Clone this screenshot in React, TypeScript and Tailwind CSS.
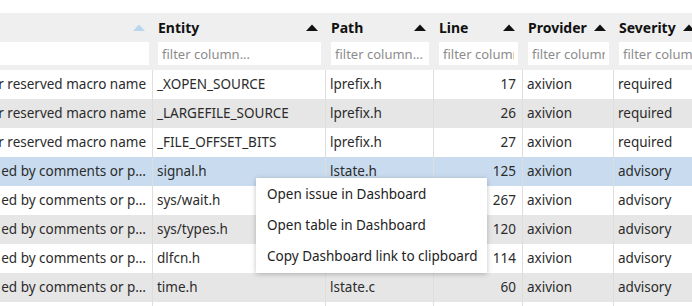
import React from "react";

const cols = [
  { key: "msg", w: "w-[153px]", title: "", first: true },
  { key: "entity", w: "w-[173px]", title: "Entity" },
  { key: "path", w: "w-[108px]", title: "Path" },
  { key: "line", w: "w-[89px]", title: "Line" },
  { key: "provider", w: "w-[91px]", title: "Provider" },
  { key: "severity", w: "w-[89px]", title: "Severity" },
];

const rows = [
  ["er reserved macro name", "_XOPEN_SOURCE", "lprefix.h", "17", "axivion", "required"],
  ["er reserved macro name", "_LARGEFILE_SOURCE", "lprefix.h", "26", "axivion", "required"],
  ["er reserved macro name", "_FILE_OFFSET_BITS", "lprefix.h", "27", "axivion", "required"],
  ["ed by comments or p…", "signal.h", "lstate.h", "125", "axivion", "advisory"],
  ["ed by comments or p…", "sys/wait.h", "", "267", "axivion", "advisory"],
  ["ed by comments or p…", "sys/types.h", "", "120", "axivion", "advisory"],
  ["ed by comments or p…", "dlfcn.h", "", "114", "axivion", "advisory"],
  ["ed by comments or p…", "time.h", "lstate.c", "60", "axivion", "advisory"],
  ["", "", "", "", "", ""],
];

function Arrow({ light }: { light?: boolean }) {
  return (
    <svg width="12" height="7" viewBox="0 0 12 7" className="shrink-0">
      <polygon points="0,7 6,0.5 12,7" fill={light ? "#b9d7ec" : "#111"} />
    </svg>
  );
}

export default function App() {
  return (
    <div
      className="relative w-[692px] h-[306px] overflow-hidden bg-white text-[13.5px] text-[#2b2b2b]"
      style={{ fontFamily: '"Noto Sans", "Open Sans", sans-serif' }}
    >
      <div className="h-[13px]" />
      {/* header */}
      <div className="flex h-[57px] bg-[#efefef]">
        {cols.map((c) => (
          <div key={c.key} className={`${c.w} shrink-0 flex flex-col`}>
            <div className="h-[29px] flex items-center justify-between pl-[5px] pr-[8px]">
              <span className="font-bold text-[#111] text-[14px]">{c.title}</span>
              <Arrow light={c.first} />
            </div>
            <div className={c.first ? "pr-[4px]" : "px-[5px]"}>
              <input
                className="w-full h-[23px] bg-white outline-none px-[4px] text-[13px] placeholder:text-[#8c8c8c]"
                placeholder={c.first ? "" : "filter column..."}
                style={{ fontFamily: '"Noto Sans", "Open Sans", sans-serif' }}
              />
            </div>
          </div>
        ))}
      </div>
      {/* rows */}
      {rows.map((r, i) => {
        const bg = i === 3 ? "bg-[#c9dcef]" : i % 2 === 1 ? "bg-[#e6e6e6]" : "bg-white";
        return (
          <div key={i} className={`flex h-[29px] ${bg}`}>
            {cols.map((c, j) => (
              <div
                key={c.key}
                className={`${c.w} shrink-0 flex items-center overflow-hidden whitespace-nowrap border-r border-[#dedede] ${
                  j === 0 ? "justify-end pr-[6px]" : j === 3 ? "justify-end pr-[6px]" : "pl-[4px]"
                }`}
              >
                {r[j]}
              </div>
            ))}
          </div>
        );
      })}
      {/* context menu */}
      <div className="absolute left-[256px] top-[178px] w-[231px] bg-white shadow-[0_1px_5px_rgba(0,0,0,0.25)] py-[1px] text-[#222]">
        {["Open issue in Dashboard", "Open table in Dashboard", "Copy Dashboard link to clipboard"].map((t) => (
          <div key={t} className="h-[31px] flex items-center pl-[11px] whitespace-nowrap">
            {t}
          </div>
        ))}
      </div>
    </div>
  );
}
